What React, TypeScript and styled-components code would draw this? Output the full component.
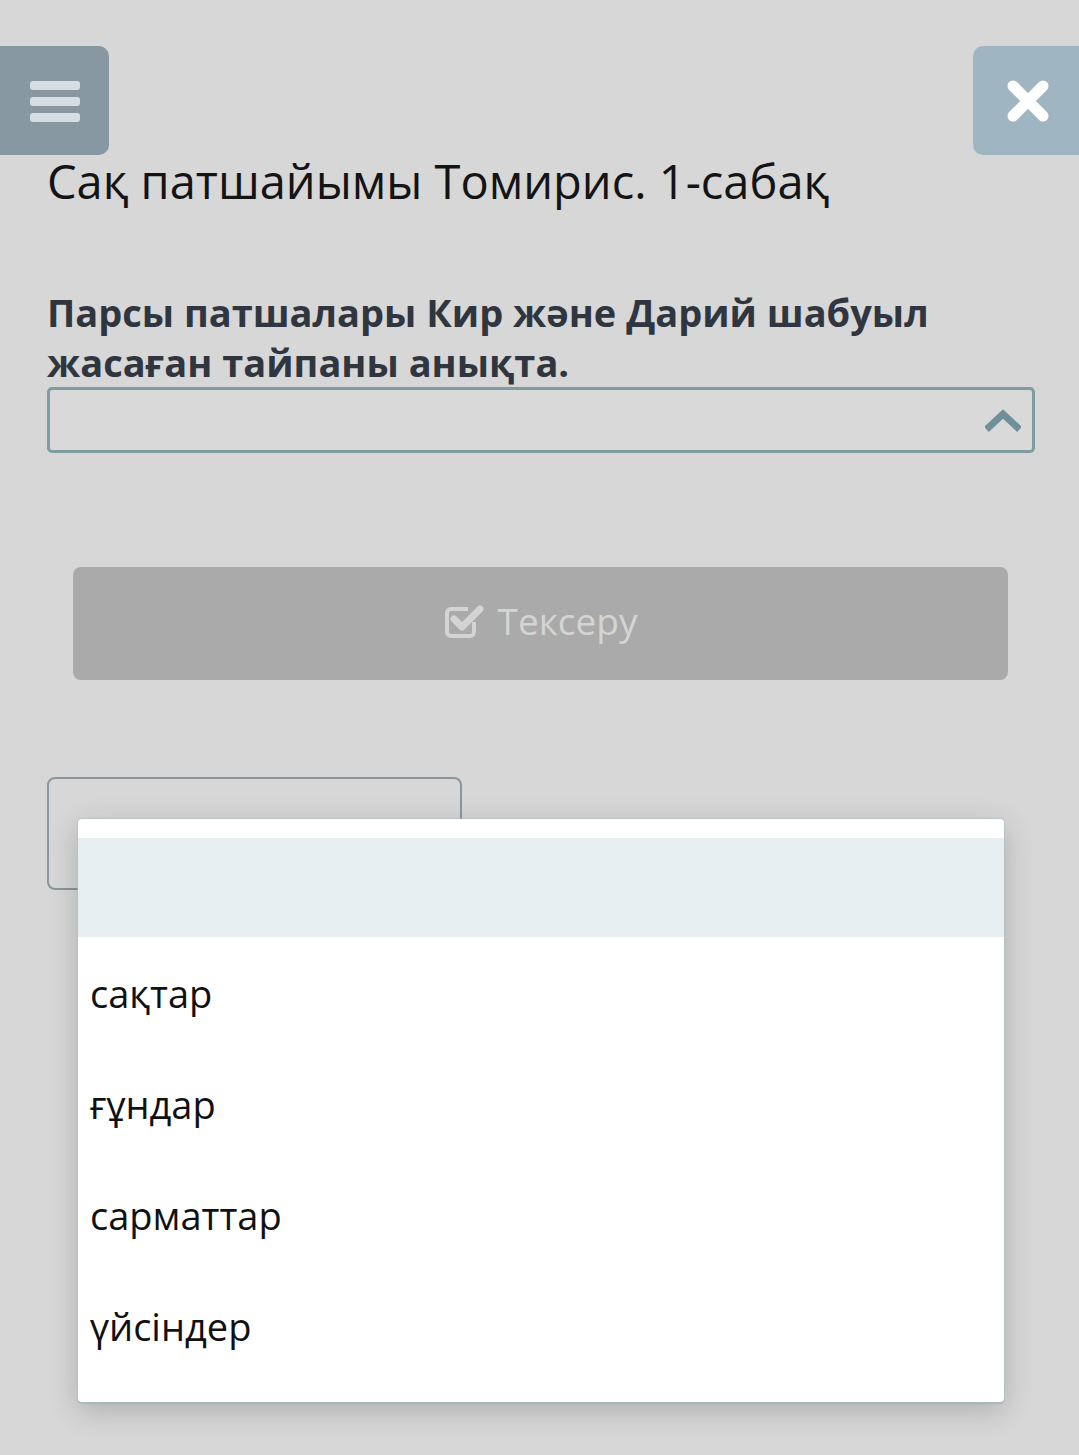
import React from "react";
import styled, { createGlobalStyle } from "styled-components";

const Global = createGlobalStyle`
  html, body { margin: 0; padding: 0; background: #d7d7d7; }
  body { font-family: "Open Sans", "Noto Sans", sans-serif; color: #111; }
  * { box-sizing: border-box; }
`;

const Page = styled.div`
  position: relative;
  width: 1079px;
  min-height: 1455px;
  background: #d7d7d7;
  overflow: hidden;
`;

const TopBar = styled.div`
  display: flex;
  justify-content: space-between;
  align-items: flex-start;
  padding-top: 46px;
`;

const MenuButton = styled.button`
  width: 109px;
  height: 109px;
  border: none;
  border-radius: 0 10px 10px 0;
  background: #8798a3;
  display: flex;
  align-items: center;
  justify-content: center;
  padding: 0;
`;

const CloseButton = styled.button`
  width: 106px;
  height: 109px;
  border: none;
  border-radius: 10px 0 0 10px;
  background: #a0b5c2;
  display: flex;
  align-items: center;
  justify-content: center;
  padding: 0 0 0 3px;
`;

const Content = styled.div`
  padding: 0 44px 0 47px;
`;

const Title = styled.h1`
  margin: 0;
  font-size: 47px;
  font-weight: 400;
  line-height: 52px;
  color: #141414;
`;

const Question = styled.p`
  margin: 80px 0 0;
  font-size: 38px;
  font-weight: 700;
  line-height: 50px;
  color: #30363f;
`;

const Select = styled.div`
  height: 66px;
  border: 3px solid #7e9ca1;
  border-radius: 5px;
  background: #d9d9d9;
  display: flex;
  align-items: center;
  justify-content: flex-end;
  padding-right: 11px;
`;

const CheckButton = styled.button`
  margin: 114px 27px 0 26px;
  width: calc(100% - 53px);
  height: 113px;
  border: none;
  border-radius: 8px;
  background: #aaaaaa;
  color: #d4d4d4;
  font-family: "Open Sans", sans-serif;
  font-size: 37px;
  display: flex;
  align-items: center;
  justify-content: center;
  gap: 14px;
  padding: 0 0 6px;
`;

const AnswerBox = styled.div`
  margin-top: 97px;
  width: 415px;
  height: 113px;
  border: 2px solid #8c959b;
  border-radius: 8px;
`;

const Dropdown = styled.ul`
  position: absolute;
  left: 78px;
  top: 819px;
  width: 926px;
  margin: 0;
  padding: 19px 0 21px;
  list-style: none;
  background: #ffffff;
  border-radius: 4px;
  box-shadow: 0 0 0 1px rgba(170, 190, 195, 0.5), 0 2px 0 rgba(150, 170, 175, 0.5),
    0 8px 30px rgba(0, 0, 0, 0.2);
`;

const Option = styled.li<{ $active?: boolean; $empty?: boolean }>`
  height: ${(p) => (p.$empty ? "99px" : "111px")};
  display: flex;
  align-items: center;
  padding-left: 12px;
  font-size: 38px;
  color: #111;
  background: ${(p) => (p.$active ? "#e8eff2" : "transparent")};
`;

const options = ["сақтар", "ғұндар", "сарматтар", "үйсіндер"];

export default function App() {
  return (
    <Page>
      <Global />
      <TopBar>
        <MenuButton aria-label="menu">
          <svg width="50" height="44" viewBox="0 0 50 44">
            <rect x="0" y="2" width="50" height="9" rx="3" fill="#d8dde0" />
            <rect x="0" y="18" width="50" height="9" rx="3" fill="#d8dde0" />
            <rect x="0" y="34" width="50" height="9" rx="3" fill="#d8dde0" />
          </svg>
        </MenuButton>
        <CloseButton aria-label="close">
          <svg width="46" height="46" viewBox="0 0 46 46">
            <path d="M8 8 L38 38 M38 8 L8 38" stroke="#ffffff" strokeWidth="11" strokeLinecap="round" />
          </svg>
        </CloseButton>
      </TopBar>
      <Content>
        <Title>Сақ патшайымы Томирис. 1-сабақ</Title>
        <Question>Парсы патшалары Кир және Дарий шабуыл жасаған тайпаны анықта.</Question>
        <Select>
          <svg width="36" height="24" viewBox="0 0 36 24">
            <path d="M4 19 L18 6 L32 19" fill="none" stroke="#6f909b" strokeWidth="7" strokeLinejoin="miter" strokeLinecap="square" />
          </svg>
        </Select>
        <CheckButton>
          <svg width="40" height="38" viewBox="0 0 40 38">
            <path d="M30 20 V30 a4 4 0 0 1 -4 4 H7 a4 4 0 0 1 -4 -4 V11 a4 4 0 0 1 4 -4 H24" fill="none" stroke="#d4d4d4" strokeWidth="4" />
            <path d="M10 17 L18 25 L36 7" fill="none" stroke="#d4d4d4" strokeWidth="7" strokeLinecap="round" strokeLinejoin="round" />
          </svg>
          Тексеру
        </CheckButton>
        <AnswerBox />
      </Content>
      <Dropdown>
        <Option $active $empty />
        {options.map((o) => (
          <Option key={o}>{o}</Option>
        ))}
      </Dropdown>
    </Page>
  );
}
